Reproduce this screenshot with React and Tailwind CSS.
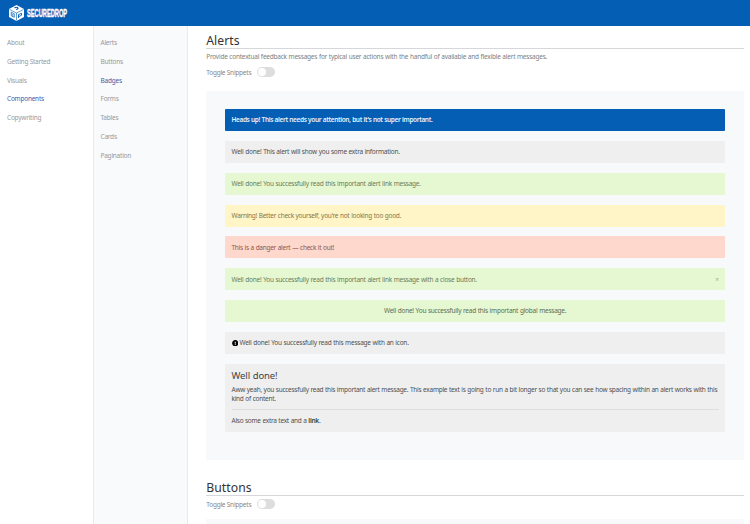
import { FaExclamationCircle } from "react-icons/fa";

function Logo() {
  return (
    <div className="flex h-[26px] shrink-0 items-center bg-[#045fb4] pl-[9px]">
      <svg className="h-[16px] w-[15px] shrink-0" viewBox="0 0 30 32">
        <path d="M15 0 30 8v16l-15 8L0 24V8Z" fill="#fff" />
        <path d="M1 9l14 7 14-7M15 16v15" fill="none" stroke="#045fb4" strokeWidth="1.2" />
        <path d="M11 6c2-2 6-2 7 0s-3 2-3 4" fill="none" stroke="#045fb4" strokeWidth="2.2" />
        <path d="M4.500 14.500l6 3v7l-6-3ZM7.500 18v3.500" fill="none" stroke="#045fb4" strokeWidth="1.500" />
        <path d="M19 19.500l6-3v4l-6 3M19 19v7" fill="none" stroke="#045fb4" strokeWidth="1.800" />
      </svg>
      <span className="ml-[3px] origin-left scale-x-[0.495] font-['Liberation_Sans',sans-serif] text-[11.5px] leading-[16px] font-bold text-white [-webkit-text-stroke:0.4px_white]">
        SECUREDROP
      </span>
    </div>
  );
}

function Nav({ items, active, className }) {
  return (
    <nav className={`flex shrink-0 flex-col pt-[11.900px] text-[6.5px] leading-[9px] tracking-[-0.23px] ${className}`}>
      {items.map((item) => (
        <a
          key={item}
          className={`mb-[9.85px] block ${item === active ? "text-[#4a5ba6]" : "text-[#97999d]"}`}
        >
          {item}
        </a>
      ))}
    </nav>
  );
}

function Heading({ children }) {
  return (
    <h2 className="h-[16px] border-b border-[#d5d7da] text-[12.2px] leading-[15px] tracking-[0.05px] text-[#333]">
      {children}
    </h2>
  );
}

function Toggle() {
  return (
    <div className="flex h-[11px] items-center text-[6.5px] leading-[9px] tracking-[-0.23px] text-[#858789]">
      <span className="w-[51px] whitespace-nowrap">Toggle Snippets</span>
      <span className="flex h-[10px] w-[17.500px] items-center rounded-full bg-[#dcdddf] pl-px">
        <span className="size-[8px] rounded-full bg-white" />
      </span>
    </div>
  );
}

function Alert({ className, children }) {
  return (
    <div className={`flex h-[22px] shrink-0 items-center rounded-[1px] px-[6.500px] pt-[0.5px] whitespace-nowrap ${className}`}>
      {children}
    </div>
  );
}

export default function App() {
  return (
    <div className="flex h-[524px] w-[750px] flex-col overflow-hidden bg-white font-['Noto_Sans',sans-serif]">
      <Logo />
      <div className="flex min-h-0 flex-1">
        <Nav
          className="w-[93px] pl-[7px]"
          items={["About", "Getting Started", "Visuals", "Components", "Copywriting"]}
          active="Components"
        />
        <Nav
          className="w-[95px] border-x border-[#e9ebed] bg-[#f8fafb] pl-[6.500px]"
          items={["Alerts", "Buttons", "Badges", "Forms", "Tables", "Cards", "Pagination"]}
          active="Badges"
        />
        <main className="ml-[18.25px] w-[537.75px] pt-[6.500px]">
          <Heading>Alerts</Heading>
          <p className="mt-[3px] h-[9px] text-[6.5px] leading-[9px] tracking-[-0.225px] [word-spacing:0.25px] whitespace-nowrap text-[#7d7f82]">
            Provide contextual feedback messages for typical user actions with the handful of available and flexible alert messages.
          </p>
          <div className="mt-[6px]">
            <Toggle />
          </div>
          <section className="mt-[13.500px] flex h-[369px] flex-col gap-[9.85px] bg-[#f8f9fb] px-[18.75px] pt-[18px] text-[6.5px] tracking-[-0.24px] [word-spacing:0.3px]">
            <Alert className="bg-[#045fb4] font-semibold tracking-[-0.37px] text-[#e6f1fc]">
              Heads up! This alert needs your attention, but it's not super important.
            </Alert>
            <Alert className="bg-[#efefef] text-[#505050]">Well done! This alert will show you some extra information.</Alert>
            <Alert className="bg-[#e5f8d2] text-[#6a7c5c]">Well done! You successfully read this important alert link message.</Alert>
            <Alert className="bg-[#fff5c7] tracking-[-0.27px] text-[#85774b]">Warning! Better check yourself, you're not looking too good.</Alert>
            <Alert className="bg-[#fed8cd] tracking-[-0.27px] text-[#8b584d]">This is a danger alert — check it out!</Alert>
            <Alert className="justify-between bg-[#e5f8d2] text-[#6a7c5c]">
              <span>Well done! You successfully read this important alert link message with a close button.</span>
              <span className="text-[#9fab91]">×</span>
            </Alert>
            <Alert className="justify-center bg-[#e5f8d2] text-[#5c6e54]">
              Well done! You successfully read this important global message.
            </Alert>
            <Alert className="bg-[#efefef] text-[#505050]">
              <FaExclamationCircle className="mr-[1.5px] size-[6.5px] text-black" />
              Well done! You successfully read this message with an icon.
            </Alert>
            <div className="h-[68.5px] shrink-0 rounded-[1px] bg-[#efefef] px-[6.500px] pt-[6.500px] text-[#505050]">
              <h4 className="h-[14.7px] text-[9.5px] leading-[12px] tracking-[-0.1px] text-[#444]">Well done!</h4>
              <p className="leading-[9.4px] tracking-[-0.265px] whitespace-nowrap">
                Aww yeah, you successfully read this important alert message. This example text is going to run a bit longer so that you can see how spacing within an alert works with this
                <br />
                kind of content.
              </p>
              <hr className="mt-[5px] mb-[6.7px] border-[#dedede]" />
              <p className="leading-[9.4px] tracking-[-0.27px]">
                Also some extra text and a <b className="font-semibold text-[#244c43]">link</b>.
              </p>
            </div>
          </section>
          <div className="mt-[19.500px]">
            <Heading>Buttons</Heading>
            <div className="mt-[3px]">
              <Toggle />
            </div>
          </div>
          <div className="mt-[9px] h-[20px] bg-[#f8f9fb]" />
        </main>
      </div>
    </div>
  );
}
